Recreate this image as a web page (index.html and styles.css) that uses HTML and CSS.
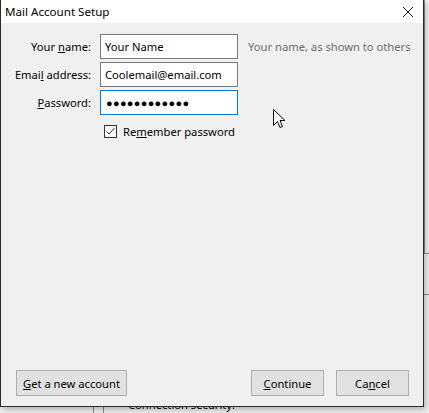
FILE: index.html
```html
<!DOCTYPE html>
<html>
<head>
<meta charset="utf-8">
<link rel="stylesheet" href="styles.css">
</head>
<body>
<div class="backdrop">
  <div class="bg-strip"></div>
  <div class="bg-lower"></div>
  <div class="bg-box"></div>
  <div class="bg-text">Connection security:</div>
</div>
<div class="dialog">
  <div class="titlebar">
    <span class="title">Mail Account Setup</span>
    <svg class="close" width="12" height="12" viewBox="0 0 12 12"><path d="M1 1 L11 11 M11 1 L1 11" stroke="#111" stroke-width="1" fill="none"/></svg>
  </div>
  <div class="content">
    <div class="form">
      <label class="lbl">Your <u>n</u>ame:</label>
      <div class="input">Your Name</div>
      <span class="hint">Your name, as shown to others</span>

      <label class="lbl">Emai<u>l</u> address:</label>
      <div class="input">Coolemail@email.com</div>
      <span></span>

      <label class="lbl"><u>P</u>assword:</label>
      <div class="input focused"><span class="dots">●●●●●●●●●●●●</span></div>
      <span></span>

      <span></span>
      <div class="check-row">
        <span class="checkbox"><svg width="11" height="11" viewBox="0 0 11 11"><path d="M1.5 5.5 L4 8 L9.5 2" stroke="#222" stroke-width="1" fill="none"/></svg></span>
        <span class="check-label">Re<u>m</u>ember password</span>
      </div>
      <span></span>
    </div>
  </div>
  <div class="footer">
    <button class="btn btn-wide"><u>G</u>et a new account</button>
    <div class="spacer"></div>
    <button class="btn"><u>C</u>ontinue</button>
    <button class="btn">Ca<u>n</u>cel</button>
  </div>
  <svg class="cursor" width="13" height="20" viewBox="0 0 13 20"><path d="M0.5 0.5 L0.5 16.5 L4.5 12.5 L7 18.5 L9.5 17.5 L7 11.5 L12 11.5 Z" fill="#fff" stroke="#000" stroke-width="1" stroke-linejoin="miter"/></svg>
</div>
</body>
</html>
```
FILE: styles.css
```css
* { box-sizing: border-box; }
html, body { margin: 0; padding: 0; }
body {
  width: 429px;
  height: 413px;
  overflow: hidden;
  position: relative;
  background: #f0f0f0;
  font-family: "Noto Sans", sans-serif;
  font-size: 11.2px;
  color: #000;
}
.backdrop { position: absolute; inset: 0; }
.bg-strip {
  position: absolute; left: 424px; top: 0; width: 5px; height: 254px;
  background: #f0f0f0; border-left: 1px solid #8a8a8a; border-bottom: 1px solid #8a8a8a;
}
.bg-lower {
  position: absolute; left: 424px; top: 294px; width: 5px; height: 1px; background: #8a8a8a;
}
.bg-box {
  position: absolute; left: 93px; top: 400px; width: 11px; height: 20px;
  border-left: 1px solid #8a8a8a; border-right: 1px solid #8a8a8a;
}
.bg-text {
  position: absolute; left: 128px; top: 398px; font-size: 11.2px; line-height: 14px; color: #000;
}
.dialog {
  position: absolute; left: 0; top: 0;
  width: 424px; height: 407px;
  border: 1px solid #2a2a2a; border-top: none;
  background: #f0f0f0;
  display: flex; flex-direction: column;
  box-shadow: 2px 3px 6px rgba(0,0,0,0.25);
}
.titlebar {
  height: 23px; background: #fff;
  display: flex; align-items: center; justify-content: space-between;
  padding: 0 9px 0 4px;
}
.title { font-size: 11.6px; color: #000; }
.close { display: block; }
.content { flex: 1; padding-top: 11px; }
.form {
  display: grid;
  grid-template-columns: 90px 138px auto;
  column-gap: 9px;
  row-gap: 3px;
  align-items: center;
}
.lbl { text-align: right; color: #000; }
.input {
  height: 25px; border: 1px solid #7a7a7a; background: #fff;
  padding: 0 4px; display: flex; align-items: center;
}
.input.focused { border-color: #0078d7; padding-left: 5px; }
.dots { font-size: 11px; letter-spacing: 0.3px; }
.hint { color: #6d6d6d; margin-left: 1px; }
.check-row {
  grid-column: 2 / 4;
  display: flex; align-items: center; gap: 6px;
  padding-left: 4px; margin-top: 6px;
}
.checkbox {
  width: 13px; height: 13px; border: 1px solid #333; background: #fff;
  display: flex; align-items: center; justify-content: center;
}
.checkbox svg { display: block; }
.footer {
  display: flex; align-items: center; gap: 12px;
  padding: 0 14px 10px 15px;
}
.spacer { flex: 1; }
.btn {
  font: inherit; color: #000;
  height: 26px; width: 73px;
  background: #e1e1e1; border: 1px solid #adadad; border-radius: 0;
  padding: 0;
}
.btn-wide { width: 111px; }
.cursor { position: absolute; left: 272px; top: 109px; }
```
